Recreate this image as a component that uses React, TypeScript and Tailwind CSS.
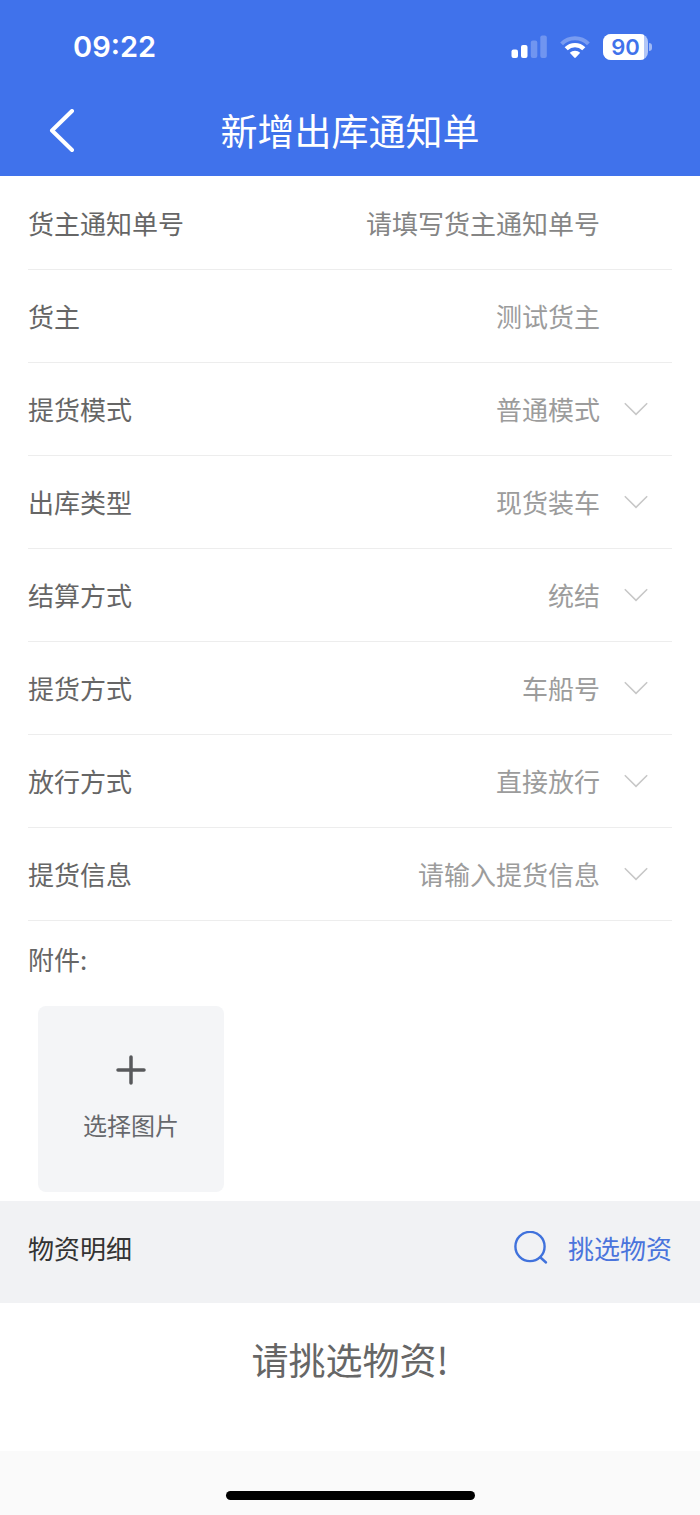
import type { ReactNode } from 'react';

type SelectField = { id: string; label: string; value: string };

const selectFields: SelectField[] = [
  { id: 'pickup-mode', label: '提货模式', value: '普通模式' },
  { id: 'outbound-type', label: '出库类型', value: '现货装车' },
  { id: 'settlement', label: '结算方式', value: '统结' },
  { id: 'pickup-method', label: '提货方式', value: '车船号' },
  { id: 'release-method', label: '放行方式', value: '直接放行' },
  { id: 'pickup-info', label: '提货信息', value: '请输入提货信息' },
];

function SignalIcon() {
  return (
    <svg width="36" height="24" viewBox="0 0 36 24" fill="#fff" aria-hidden="true">
      <rect x="0.5" y="14.5" width="6.5" height="8.5" rx="2" />
      <rect x="10" y="10" width="6.5" height="13" rx="2" />
      <rect x="19.8" y="5.5" width="6.5" height="17.5" rx="2" opacity="0.25" />
      <rect x="29.3" y="0.5" width="6.5" height="22.5" rx="2" opacity="0.25" />
    </svg>
  );
}

function WifiIcon() {
  return (
    <svg width="30" height="22" viewBox="0 0 30 22" fill="none" aria-hidden="true">
      <path d="M1.6 7.8a19 19 0 0 1 26.8 0" stroke="#fff" strokeWidth="4" opacity="0.3" />
      <path d="M6.2 12.8a12.4 12.4 0 0 1 17.600 0" stroke="#fff" strokeWidth="4.400" />
      <path d="M9.800 16.800a7.400 7.400 0 0 1 10.400 0L15.800 21.500a1.100 1.100 0 0 1-1.600 0Z" fill="#fff" />
    </svg>
  );
}

function Battery() {
  return (
    <div className="flex items-center gap-px">
      <div className="flex h-[26px] w-[45px] overflow-hidden rounded-lg bg-white/60">
        <span className="flex w-[41px] items-center justify-center bg-white pl-1 font-['Inter','Liberation_Sans',sans-serif] text-[22px] leading-[26px] font-semibold text-[#4072eb]">
          90
        </span>
      </div>
      <span className="h-2 w-[3px] rounded-r-full bg-white/50" />
    </div>
  );
}

function Chevron() {
  return (
    <svg
      width="24"
      height="14"
      viewBox="0 0 24 14"
      fill="none"
      stroke="#c8c8c8"
      strokeWidth="1.6"
      className="pointer-events-none shrink-0"
      aria-hidden="true"
    >
      <path d="M0.8 1.2 12 12.4 23.2 1.2" />
    </svg>
  );
}

function Row({ id, label, children }: { id: string; label: string; children: ReactNode }) {
  return (
    <div className="flex h-[93px] items-center gap-6 border-b border-[#ededed] pr-6">
      <label htmlFor={id} className="shrink-0 text-[#666]">
        {label}
      </label>
      {children}
    </div>
  );
}

export default function App() {
  return (
    <div className="flex min-h-screen flex-col bg-[#fafafa] font-['Noto_Sans_CJK_SC',sans-serif] text-[26px] leading-9">
      <header className="bg-[#4072eb] pb-2 text-white">
        <div className="flex h-[94px] items-center justify-between pr-12 pl-[73px]">
          <span className="font-['Inter','Liberation_Sans',sans-serif] text-[29px] font-semibold">09:22</span>
          <div className="flex items-center gap-[13px]">
            <SignalIcon />
            <WifiIcon />
            <Battery />
          </div>
        </div>
        <div className="grid h-[74px] grid-cols-[76px_1fr_76px] items-center">
          <button type="button" aria-label="返回" className="flex h-full items-center justify-end">
            <svg width="28" height="44" viewBox="0 0 28 44" fill="none" stroke="#fff" strokeWidth="4" strokeLinecap="round" strokeLinejoin="round" aria-hidden="true">
              <path d="M24 2 4 21.500 24 41" />
            </svg>
          </button>
          <h1 className="pb-0.5 text-center text-[37px] leading-[54px]">新增出库通知单</h1>
        </div>
      </header>

      <main className="bg-white">
        <form className="px-7 pt-px">
          <Row id="notice-no" label="货主通知单号">
            <input
              id="notice-no"
              type="text"
              placeholder="请填写货主通知单号"
              className="min-w-0 flex-1 bg-transparent text-right placeholder:text-[#858585] outline-none"
            />
            <span className="w-6 shrink-0" />
          </Row>
          <Row id="owner" label="货主">
            <input
              id="owner"
              type="text"
              readOnly
              value="测试货主"
              className="min-w-0 flex-1 bg-transparent text-right text-[#9c9c9c] outline-none"
            />
            <span className="w-6 shrink-0" />
          </Row>
          {selectFields.map((f) => (
            <Row key={f.id} id={f.id} label={f.label}>
              <select
                id={f.id}
                className="min-w-0 flex-1 appearance-none bg-transparent text-right text-[#9c9c9c] outline-none [text-align-last:right]"
              >
                <option>{f.value}</option>
              </select>
              <Chevron />
            </Row>
          ))}

          <div className="pb-[9px]">
            <p className="leading-[76px] text-[#666]">附件:</p>
            <button
              type="button"
              className="mt-[9px] ml-[10px] flex size-[186px] flex-col items-center justify-center gap-6 rounded-lg bg-[#f4f5f7] pb-0.5 text-2xl text-[#66686c]"
            >
              <svg width="30" height="30" viewBox="0 0 30 30" fill="none" stroke="#58595c" strokeWidth="3.500" strokeLinecap="round" aria-hidden="true">
                <path d="M15 2v26M2 15h26" />
              </svg>
              选择图片
            </button>
          </div>
        </form>

        <section>
          <div className="bg-[#f1f2f4] px-7 pb-2">
            <div className="flex h-[94px] items-center justify-between">
              <h2 className="text-[#333]">物资明细</h2>
              <button type="button" className="flex items-center gap-5 text-[#4a74dc]">
                <svg width="34" height="34" viewBox="0 0 34 34" fill="none" stroke="#4072dc" strokeWidth="2.400" strokeLinecap="round" aria-hidden="true">
                  <circle cx="16" cy="15.500" r="14.600" />
                  <path d="m26.500 26.500 5.500 5" />
                </svg>
                挑选物资
              </button>
            </div>
          </div>
          <p className="pt-7 pb-16 text-center text-[37px] leading-[56px] text-[#666]">请挑选物资!</p>
        </section>
      </main>

      <footer className="flex justify-center pt-10 pb-[15px]">
        <span className="h-[9px] w-[249px] rounded-full bg-black" />
      </footer>
    </div>
  );
}
